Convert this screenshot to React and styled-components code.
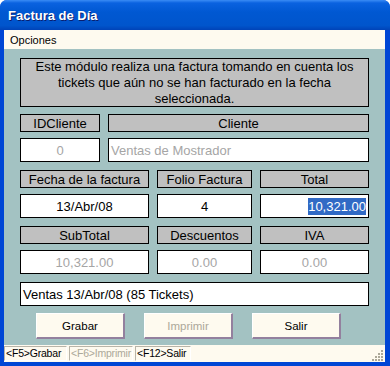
import React from 'react';
import styled, { createGlobalStyle } from 'styled-components';

const GlobalStyle = createGlobalStyle`
	html, body {
		margin: 0;
		padding: 0;
		background: #ffffff;
	}
	body {
		font-family: "Liberation Sans", Arial, sans-serif;
	}
`;

const Window = styled.div`
	width: 390px;
	height: 366px;
	box-sizing: border-box;
	display: flex;
	flex-direction: column;
	background: #0046d5;
	border-radius: 7px 7px 0 0;
	overflow: hidden;
`;

const TitleBar = styled.div`
	height: 30px;
	flex-shrink: 0;
	display: flex;
	align-items: center;
	padding-left: 8px;
	background: linear-gradient(
		#3a8cf5 0,
		#0a62e0 3px,
		#0058d2 40%,
		#0055cc 85%,
		#0043b8 100%
	);
	color: #ffffff;
	font-weight: bold;
	font-size: 13px;
	text-shadow: 1px 1px 0 #0a1e6e;
`;

const Frame = styled.div`
	flex: 1;
	display: flex;
	flex-direction: column;
	margin: 0 5px 4px 4px;
	background: #a3c2c2;
`;

const MenuBar = styled.div`
	height: 19px;
	display: flex;
	align-items: center;
	padding-left: 6px;
	background: #fefaef;
	font-size: 11px;
	color: #000000;
`;

const Body = styled.div`
	flex: 1;
	display: flex;
	flex-direction: column;
	padding: 9px 16px 0 16px;
`;

const Notice = styled.div`
	height: 49px;
	box-sizing: border-box;
	border: 1px solid #000000;
	background: #c0c0c0;
	font-size: 13px;
	line-height: 16px;
	text-align: center;
	padding: 0 6px;
	display: flex;
	align-items: center;
	justify-content: center;
`;

const Grid = styled.div`
	display: grid;
	grid-template-columns: ${(p) => p.$cols};
	column-gap: 8px;
	margin-top: ${(p) => p.$top}px;
`;

const Label = styled.div`
	height: 18px;
	box-sizing: border-box;
	border: 1px solid #000000;
	background: #c0c0c0;
	font-size: 13px;
	display: flex;
	align-items: center;
	justify-content: center;
`;

const Field = styled.div`
	height: 24px;
	box-sizing: border-box;
	border: 1px solid #000000;
	background: #ffffff;
	font-size: 13px;
	margin-top: 6px;
	padding: 0 2px;
	display: flex;
	align-items: center;
	justify-content: ${(p) =>
		p.$align === 'left' ? 'flex-start' : p.$align === 'right' ? 'flex-end' : 'center'};
	color: ${(p) => (p.$disabled ? '#a5a5a5' : '#000000')};
`;

const Selected = styled.span`
	background: #316ac5;
	color: #ffffff;
	padding: 1px 0;
`;

const Summary = styled.div`
	height: 24px;
	box-sizing: border-box;
	border: 1px solid #000000;
	background: #ffffff;
	font-size: 13px;
	margin-top: 8px;
	padding: 0 2px;
	display: flex;
	align-items: center;
`;

const ButtonRow = styled.div`
	display: flex;
	gap: 19px;
	margin-top: 7px;
	padding-left: 16px;
`;

const Button = styled.div`
	width: 89px;
	height: 26px;
	box-sizing: border-box;
	background: #fefaef;
	border-top: 1px solid #ffffff;
	border-left: 1px solid #ffffff;
	border-right: 2px solid #93809e;
	border-bottom: 2px solid #93809e;
	font-size: 11.5px;
	display: flex;
	align-items: center;
	justify-content: center;
	color: ${(p) => (p.$disabled ? '#aca899' : '#000000')};
`;

const StatusBar = styled.div`
	margin-top: auto;
	height: 17px;
	box-sizing: border-box;
	background: #fefaef;
	display: flex;
	align-items: center;
	gap: 2px;
	position: relative;
`;

const Panel = styled.div`
	height: 15px;
	box-sizing: border-box;
	width: ${(p) => p.$w}px;
	border-top: 1px solid #b8b4a8;
	border-left: 1px solid #b8b4a8;
	border-right: 1px solid #ffffff;
	border-bottom: 1px solid #ffffff;
	font-size: 10.5px;
	letter-spacing: -0.2px;
	line-height: 13px;
	padding-left: 1px;
	white-space: nowrap;
	color: ${(p) => (p.$disabled ? '#aca899' : '#000000')};
`;

const Grip = styled.svg`
	position: absolute;
	right: 1px;
	bottom: 1px;
`;

export default function App() {
	return (
		<>
			<GlobalStyle />
			<Window>
				<TitleBar>Factura de Día</TitleBar>
				<Frame>
					<MenuBar>Opciones</MenuBar>
					<Body>
						<Notice>
							Este módulo realiza una factura tomando en cuenta los tickets que aún no se han
							facturado en la fecha seleccionada.
						</Notice>

						<Grid $cols="80px 1fr" $top={7}>
							<Label>IDCliente</Label>
							<Label>Cliente</Label>
							<Field $disabled>0</Field>
							<Field $disabled $align="left">
								Ventas de Mostrador
							</Field>
						</Grid>

						<Grid $cols="129px 95px 1fr" $top={8}>
							<Label>Fecha de la factura</Label>
							<Label>Folio Factura</Label>
							<Label>Total</Label>
							<Field>13/Abr/08</Field>
							<Field>4</Field>
							<Field $align="right">
								<Selected>10,321.00</Selected>
							</Field>
						</Grid>

						<Grid $cols="129px 95px 1fr" $top={8}>
							<Label>SubTotal</Label>
							<Label>Descuentos</Label>
							<Label>IVA</Label>
							<Field $disabled>10,321.00</Field>
							<Field $disabled>0.00</Field>
							<Field $disabled>0.00</Field>
						</Grid>

						<Summary>Ventas 13/Abr/08 (85 Tickets)</Summary>

						<ButtonRow>
							<Button>Grabar</Button>
							<Button $disabled>Imprimir</Button>
							<Button>Salir</Button>
						</ButtonRow>
					</Body>
					<StatusBar>
						<Panel $w={63}>&lt;F5&gt;Grabar</Panel>
						<Panel $w={64} $disabled>
							&lt;F6&gt;Imprimir
						</Panel>
						<Panel $w={56}>&lt;F12&gt;Salir</Panel>
						<Grip width="12" height="12" viewBox="0 0 12 12">
							<g fill="#aca899">
								<rect x="9" y="1" width="2" height="2" />
								<rect x="6" y="4" width="2" height="2" />
								<rect x="9" y="4" width="2" height="2" />
								<rect x="3" y="7" width="2" height="2" />
								<rect x="6" y="7" width="2" height="2" />
								<rect x="9" y="7" width="2" height="2" />
								<rect x="0" y="10" width="2" height="2" />
								<rect x="3" y="10" width="2" height="2" />
								<rect x="6" y="10" width="2" height="2" />
								<rect x="9" y="10" width="2" height="2" />
							</g>
						</Grip>
					</StatusBar>
				</Frame>
			</Window>
		</>
	);
}
